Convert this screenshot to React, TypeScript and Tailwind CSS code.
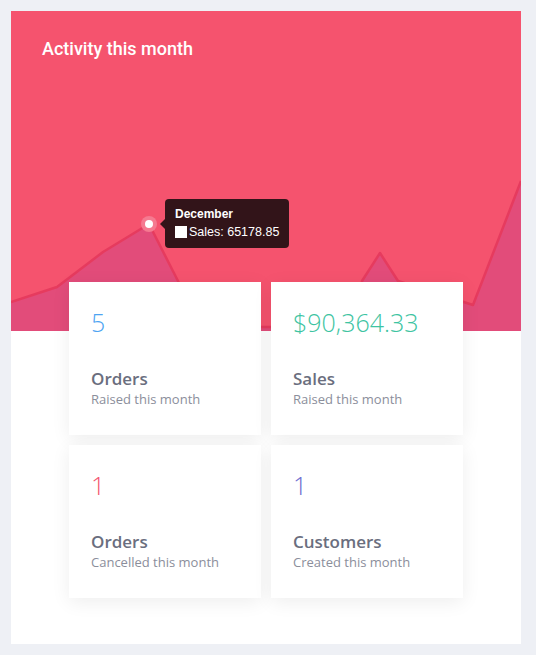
import React from "react";

const stats = [
  { value: "5", color: "text-[#4ea4f2]", title: "Orders", sub: "Raised this month" },
  { value: "$90,364.33", color: "text-[#3ec4a2]", title: "Sales", sub: "Raised this month" },
  { value: "1", color: "text-[#f4536e]", title: "Orders", sub: "Cancelled this month" },
  { value: "1", color: "text-[#6c6ccf]", title: "Customers", sub: "Created this month" },
];

function Chart() {
  const pts = "0,291 46,276 92,241 138,213 168,272 190,316 345,316 351,270 369,242 387,270 462,294 510,170";
  return (
    <svg className="absolute inset-0" width="510" height="320" viewBox="0 0 510 320">
      <polygon points={`${pts} 510,320 0,320`} fill="#e24c7a" />
      <polyline points={pts} fill="none" stroke="#e63b5e" strokeWidth="2.5" strokeLinejoin="round" />
      <circle cx="138" cy="213" r="8" fill="#f57a90" />
      <circle cx="138" cy="213" r="4" fill="#ffffff" />
    </svg>
  );
}

export default function App() {
  return (
    <div className="min-h-[655px] bg-[#eef0f5] pt-[11px] pl-[11px] pb-[11px]" style={{ fontFamily: "'Open Sans', sans-serif" }}>
      <div className="w-[510px] bg-white pb-[46px]">
        <div className="relative h-[320px] bg-[#f5536e]">
          <Chart />
          <div className="relative pl-[31px] pt-[24px] text-[18px] font-medium text-white" style={{ fontFamily: "Roboto, sans-serif" }}>
            Activity this month
          </div>
          {/* tooltip */}
          <div className="absolute left-[154px] top-[188px] w-[124px] whitespace-nowrap rounded-[4px] bg-[#321419] pl-[10px] pt-[7px] pb-[8px] text-[12px] leading-[16px] text-white" style={{ fontFamily: "'Liberation Sans', Arial, sans-serif" }}>
            <div className="absolute left-[-5px] top-[20px] h-0 w-0 border-y-[5px] border-r-[5px] border-y-transparent border-r-[#321419]" />
            <div className="font-bold">December</div>
            <div className="mt-[2px] flex items-center gap-[2px] text-[12.5px]">
              <span className="inline-block h-[12px] w-[12px] shrink-0 bg-white" />
              <span>Sales: 65178.85</span>
            </div>
          </div>
        </div>
        <div className="relative mx-[58px] -mt-[49px] grid grid-cols-2 gap-[10px]">
          {stats.map((s, i) => (
            <div key={i} className="h-[153px] bg-white px-[22px] pt-[24px] shadow-[0_4px_18px_rgba(0,0,0,0.07)]">
              <div className={`text-[25px] font-light leading-[32px] ${s.color}`}>{s.value}</div>
              <div className="mt-[30px] text-[17px] font-semibold leading-[22px] text-[#6a6e7e]">{s.title}</div>
              <div className="text-[13px] leading-[18px] text-[#8b8e9b]">{s.sub}</div>
            </div>
          ))}
        </div>
      </div>
    </div>
  );
}
